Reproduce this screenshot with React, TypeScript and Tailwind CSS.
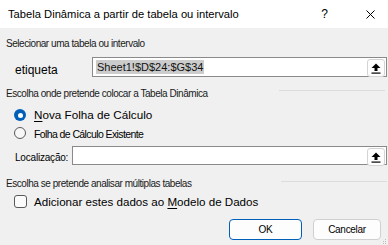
import { useState } from 'react'

function UploadButton() {
  return (
    <button
      type="button"
      className="ml-auto mr-px mt-px flex h-[18px] w-[18px] items-center justify-center rounded-[3px] border border-[#d4d4d4] bg-[#fdfdfd]"
    >
      <svg width="10" height="11" viewBox="0 0 10 11">
        <path d="M5 0.5 L9.5 5 L6.5 5 L6.5 8 L3.5 8 L3.5 5 L0.5 5 Z" fill="#000" />
        <rect x="0.5" y="9.5" width="9" height="1.2" fill="#000" />
      </svg>
    </button>
  )
}

function SectionHeader({ label, lineClass }: { label: string; lineClass?: string }) {
  return (
    <div className="flex items-start">
      <span className="text-[10px] leading-[11px] tracking-[-0.45px] text-[#1a1a1a]">{label}</span>
      <div className={`ml-auto mt-[2px] h-px w-[106px] bg-[#dcdcdc] ${lineClass ?? ''}`} />
    </div>
  )
}

export default function App() {
  const [target, setTarget] = useState<'new' | 'existing'>('new')
  const [dataModel, setDataModel] = useState(false)

  return (
    <div className="relative flex h-[245px] w-[388px] flex-col overflow-hidden bg-[#f0f0f0] font-['Liberation_Sans',Arial,sans-serif] text-black">
      {/* title bar */}
      <div className="flex h-[28px] shrink-0 items-center bg-white pl-2">
        <span className="text-[11.2px] leading-[14px]">Tabela Dinâmica a partir de tabela ou intervalo</span>
        <span className="ml-auto text-[12px] leading-[14px]">?</span>
        <svg className="ml-[38px] mr-[13px]" width="9" height="9" viewBox="0 0 9 9">
          <path d="M0.5 0.5 L8.5 8.5 M8.5 0.5 L0.5 8.5" stroke="#000" strokeWidth="1" />
        </svg>
      </div>

      <div className="flex flex-col pl-[6px] pr-px">
        <div className="mt-[10px] flex">
          <span className="text-[10px] leading-[11px] tracking-[-0.45px] text-[#1a1a1a]">
            Selecionar uma tabela ou intervalo
          </span>
        </div>

        {/* range row */}
        <div className="mt-[8px] flex h-[20px]">
          <span className="mt-[6px] w-[86px] pl-[9px] text-[12px] leading-[14px]">etiqueta</span>
          <div className="flex flex-1 border border-[#8a8a8a] bg-white">
            <span className="ml-[3px] mt-[2px] h-[14px] bg-[#cccccc] px-px text-[11px] leading-[14px] text-[#111]">
              Sheet1!$D$24:$G$34
            </span>
            <UploadButton />
          </div>
        </div>

        <div className="mt-[11px] pr-[2px]">
          <SectionHeader label="Escolha onde pretende colocar a Tabela Dinâmica" />
        </div>

        {/* radios */}
        <label className="mt-[8px] flex h-[16px] cursor-pointer items-center pl-[8px]" onClick={() => setTarget('new')}>
          <span
            className={
              target === 'new'
                ? 'flex h-[12px] w-[12px] items-center justify-center rounded-full bg-[#005fb8]'
                : 'h-[12px] w-[12px] rounded-full border border-[#5a5a5a] bg-[#f7f7f7]'
            }
          >
            {target === 'new' ? <span className="h-[5px] w-[5px] rounded-full bg-white" /> : null}
          </span>
          <span className="ml-[8px] text-[11.7px] leading-[16px]">
            <span className="underline underline-offset-2">N</span>ova Folha de Cálculo
          </span>
        </label>
        <label className="mt-[2px] flex h-[16px] cursor-pointer items-center pl-[8px]" onClick={() => setTarget('existing')}>
          <span
            className={
              target === 'existing'
                ? 'flex h-[12px] w-[12px] items-center justify-center rounded-full bg-[#005fb8]'
                : 'h-[12px] w-[12px] rounded-full border border-[#5a5a5a] bg-[#f7f7f7]'
            }
          >
            {target === 'existing' ? <span className="h-[5px] w-[5px] rounded-full bg-white" /> : null}
          </span>
          <span className="ml-[8px] mt-[3px] text-[10.5px] leading-[13px] tracking-[-0.6px]">
            Folha de Cálculo Existente
          </span>
        </label>

        {/* location row */}
        <div className="mt-[5px] flex h-[19px] items-end">
          <span className="mb-px w-[66px] pl-[9px] text-[10px] leading-[12px] tracking-[-0.2px]">Localização:</span>
          <div className="flex h-[19px] flex-1 border border-[#8a8a8a] bg-white">
            <UploadButton />
          </div>
        </div>

        <div className="mt-[13px]">
          <SectionHeader label="Escolha se pretende analisar múltiplas tabelas" lineClass="mt-[3px]" />
        </div>

        {/* checkbox */}
        <label className="mt-[5px] flex h-[15px] cursor-pointer items-center pl-[8px]" onClick={() => setDataModel(!dataModel)}>
          <span
            className={
              dataModel
                ? 'h-[13px] w-[13px] rounded-[3px] bg-[#005fb8]'
                : 'h-[13px] w-[13px] rounded-[3px] border border-[#5a5a5a] bg-[#fbfbfb]'
            }
          />
          <span className="ml-[7px] text-[11.6px] leading-[15px]">
            Adicionar estes dados ao <span className="underline underline-offset-2">M</span>odelo de Dados
          </span>
        </label>

        {/* buttons */}
        <div className="mt-[10px] flex justify-end gap-[11px] pr-[6px]">
          <button
            type="button"
            className="h-[21px] w-[73px] rounded-[4px] border border-[#005fb8] bg-[#fdfdfd] text-[10px] leading-[12px] tracking-[-0.3px]"
          >
            OK
          </button>
          <button
            type="button"
            className="h-[21px] w-[68px] rounded-[4px] border border-[#d0d0d0] bg-[#fdfdfd] text-[10px] leading-[12px] tracking-[-0.3px]"
          >
            Cancelar
          </button>
        </div>
      </div>

      {/* resize grip */}
      <svg className="absolute bottom-px right-px" width="5" height="5" viewBox="0 0 5 5">
        <rect x="3" y="0" width="1" height="1" fill="#bdbdbd" />
        <rect x="3" y="2" width="1" height="1" fill="#bdbdbd" />
        <rect x="1" y="2" width="1" height="1" fill="#bdbdbd" />
        <rect x="3" y="4" width="1" height="1" fill="#bdbdbd" />
        <rect x="1" y="4" width="1" height="1" fill="#bdbdbd" />
      </svg>
    </div>
  )
}
